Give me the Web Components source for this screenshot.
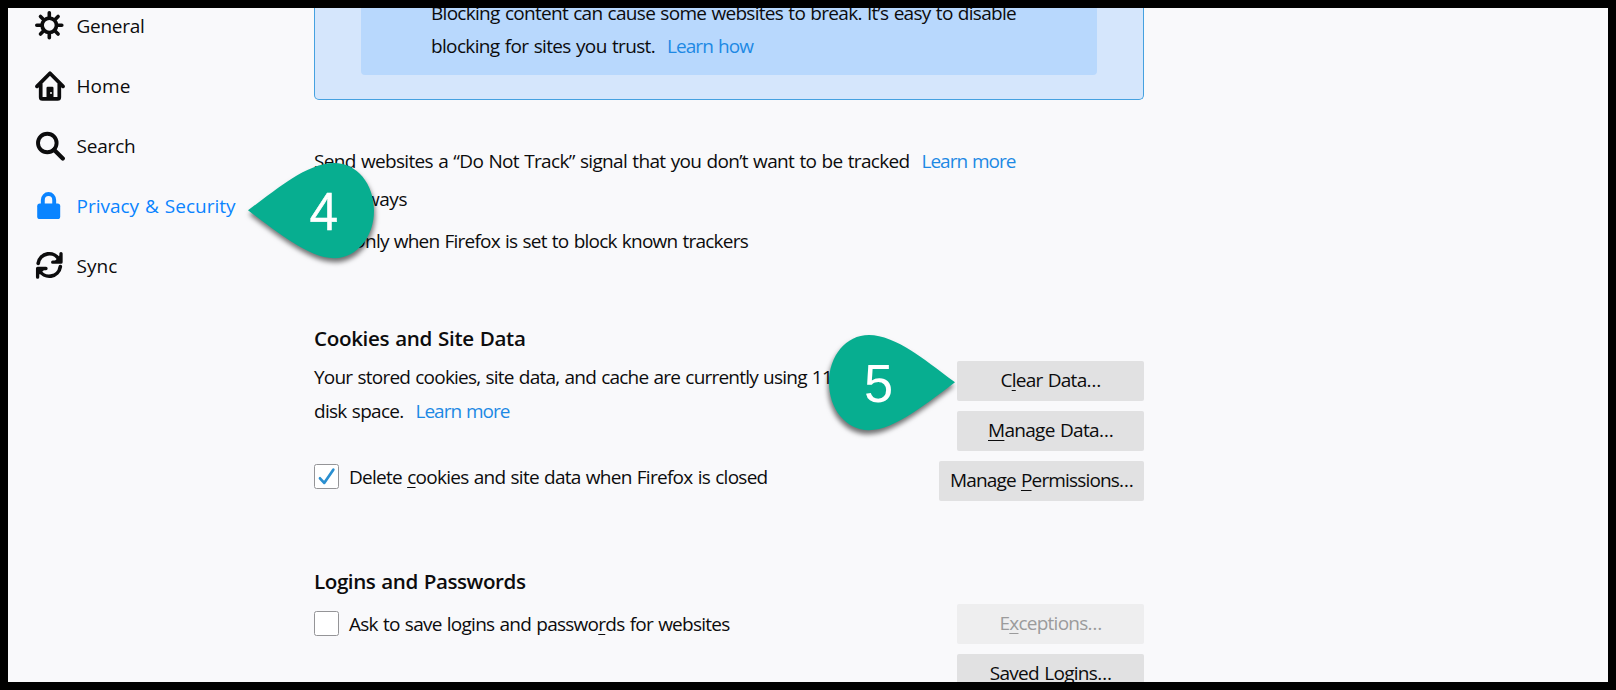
<!DOCTYPE html>
<html lang="en">
<head>
<meta charset="utf-8">
<title>Privacy &amp; Security</title>
<style>
html, body { margin: 0; height: 100%; background: #000; overflow: hidden; }
body { font-family: "Open Sans", "Noto Sans", sans-serif; font-size: 19px; color: #0c0c0d; }
</style>
</head>
<body>
<settings-page></settings-page>
<script>
const define = (name, html, setup) => customElements.define(name, class extends HTMLElement {
  connectedCallback() {
    if (this.shadowRoot) return;
    const t = document.createElement('template');
    t.innerHTML = html;
    this.attachShadow({ mode: 'open' }).append(t.content.cloneNode(true));
    if (setup) setup(this, this.shadowRoot);
  }
});

const ICONS = {
  general: `<circle cx="14.3" cy="14.3" r="7.2" fill="none" stroke="currentColor" stroke-width="3.7"/><path d="M14.3 1.8v4M14.3 22.8v4M1.8 14.3h4M22.8 14.3h4M5.5 5.5l3 3M20.1 20.1l3 3M5.5 23.1l3-3M20.1 8.5l3-3" stroke="currentColor" stroke-width="3.6" stroke-linecap="round"/>`,
  home: `<path d="M2 15.4 15 2.3 28 15.4M5.7 13v13.2q0 1.7 1.7 1.7h15.2q1.7 0 1.7-1.7V13" fill="none" stroke="currentColor" stroke-width="3.7" stroke-linecap="round" stroke-linejoin="round"/><path d="M11.5 28V17q0-1.2 1.2-1.2h4.6q1.2 0 1.2 1.2v11z" fill="currentColor"/><circle cx="16" cy="22" r="1" fill="#f9f9fa"/>`,
  search: `<circle cx="12.3" cy="12" r="9.3" fill="none" stroke="currentColor" stroke-width="3.9"/><path d="M19 18.7 27.8 27.5" stroke="currentColor" stroke-width="4.2" stroke-linecap="round"/>`,
  lock: `<path d="M7.8 14V9a5.7 6 0 0 1 11.4 0v5" fill="none" stroke="currentColor" stroke-width="3.9"/><rect x="2.2" y="12.6" width="23" height="15.4" rx="2.6" fill="currentColor"/>`,
  sync: `<path d="M3.2 12.3A11.2 11.2 0 0 1 24.3 9M25.3 15.7A11.2 11.2 0 0 1 4.2 19" fill="none" stroke="currentColor" stroke-width="3.7" stroke-linecap="round"/><path d="M26 2.6v8.6h-8.3M2.6 26.2v-8.7H11" fill="none" stroke="currentColor" stroke-width="3.3" stroke-linecap="round" stroke-linejoin="round"/><path d="M26 3v8h-7zM2.6 25v-7H10z" fill="currentColor"/>`
};

/* One run of text, tracked so that it fills the width in its "w" attribute. */
define('fit-text', `<style>
  :host { display: inline-block; white-space: pre; word-spacing: 1px; }
  ::slotted(u) { text-decoration-thickness: 1.4px; text-underline-offset: 2.5px; text-decoration-skip-ink: none; }
</style><slot></slot>`, el => {
  const w = +el.getAttribute('w'), n = el.textContent.length;
  el.style.letterSpacing = ((w - el.getBoundingClientRect().width) / n).toFixed(3) + 'px';
});

define('nav-item', `<style>
  :host { display: flex; align-items: center; height: 60px; padding-left: 27px; line-height: 36px; }
  :host([active]) { color: #0a84ff; }
  svg { width: 30px; height: 30px; margin-right: 11.5px; flex: none; display: block; }
</style><svg viewBox="0 0 30 30"></svg><slot></slot>`, (el, root) => {
  root.querySelector('svg').innerHTML = ICONS[el.getAttribute('icon')];
});

define('text-link', `<style>:host { color: #1d89e4; margin-left: 12px; }</style><slot></slot>`);

define('push-button', `<style>
  :host { display: block; box-sizing: border-box; min-width: 187px; height: 40px; line-height: 39px;
    padding: 0 11px; text-align: center; background: #e1e1e2; border-radius: 2px; white-space: nowrap; }
  :host([disabled]) { background: #eeeeef; color: #9b9b9c; }
</style><slot></slot>`);

define('check-box', `<style>
  :host { display: flex; align-items: center; height: 33px; line-height: 33px; }
  i { box-sizing: border-box; width: 25px; height: 25px; margin-right: 10px; border: 1px solid #949497; border-radius: 2.5px; background: #fff; }
  svg { display: none; width: 23px; height: 23px; }
  :host([checked]) svg { display: block; }
  slot { display: block; padding-top: 2px; }
</style><i><svg viewBox="0 0 23 23"><path d="M5 13.3 9.2 17.9 18.3 4.7" fill="none" stroke="#2a8fd0" stroke-width="2.7" stroke-linecap="round" stroke-linejoin="round"/></svg></i><slot></slot>`);

define('section-title', `<style>
  :host { display: block; height: 33px; line-height: 35px; font-size: 20.6px; font-weight: 600; }
</style><slot></slot>`);

define('info-panel', `<style>
  :host { display: block; box-sizing: border-box; width: 830px; margin-top: -13px; padding: 0 46px 24px; background: #d5e6fc;
    border: 1px solid #45a1e0; border-top: 0; border-radius: 0 0 5px 5px; }
  div { padding: 0 0 13px 70px; background: #b8d8fd; border-radius: 0 0 4px 4px; line-height: 33px; }
</style><div><slot></slot></div>`);

/* Numbered teardrop marker laid over the page. */
define('step-pin', `<style>
  :host { position: absolute; width: 127px; height: 96px; }
  svg { position: absolute; inset: 0; overflow: visible; filter: drop-shadow(1px 4px 2.5px rgba(0,0,0,.55)); }
  :host([flip]) svg { transform: scaleX(-1); }
  span { position: absolute; left: 24px; right: 0; top: 0; text-align: center; line-height: 94px; color: #fff; font-size: 51.5px; -webkit-text-stroke: .6px #fff; transform: scaleX(.94); }
  :host([flip]) span { left: 0; right: 26px; font-family: "Liberation Sans", sans-serif; font-size: 54px; line-height: 96px; -webkit-text-stroke: 0; transform: scaleX(.97); }
</style><svg width="127" height="96" viewBox="0 0 127 96"><path d="M0 47.3C18 34 32 23 44 15.5 58 6.5 73 0 86 0 109 0 126 21 126 47.5 126 74 109 95.2 86 95.2 73 95.2 58 88 44 79 32 71.5 18 61 0 47.3z" fill="#07ae90"/></svg><span><slot></slot></span>`);

define('settings-page', `<style>
  :host { display: block; box-sizing: border-box; width: 1616px; height: 690px; padding: 8px; background: #000; }
  .frame { position: relative; display: flex; height: 674px; box-sizing: border-box; padding-top: 1px; overflow: hidden; background: #f9f9fb; }
  nav { width: 306px; flex: none; margin-top: -13px; }
  main { width: 830px; flex: none; }
  .line { height: 33px; line-height: 35px; white-space: nowrap; }
  .send { margin-top: 44px; }
  .choice { padding-left: 35px; margin-top: 5px; }
  .choice + .choice { margin-top: 9px; padding-left: 37px; }
  .row { display: flex; justify-content: space-between; margin-top: 6px; }
  .copy { line-height: 34px; white-space: nowrap; }
  .copy check-box { margin-top: 32px; }
  .buttons { display: flex; flex-direction: column; align-items: flex-end; gap: 10px; margin-top: 1px; }
  .cookies { margin-top: 64px; }
  .logins { margin-top: 63px; }
  .last { margin-top: 7px; }
  .last .buttons { margin-top: 0; }
  .last .copy check-box { margin-top: 3px; }
  .four { left: 240px; top: 155px; }
  .five { left: 820px; top: 327px; }
</style>
<div class="frame">
  <nav>
    <nav-item icon="general"><fit-text w="68">General</fit-text></nav-item>
    <nav-item icon="home"><fit-text w="54">Home</fit-text></nav-item>
    <nav-item icon="search"><fit-text w="59">Search</fit-text></nav-item>
    <nav-item icon="lock" active><fit-text w="159">Privacy &amp; Security</fit-text></nav-item>
    <nav-item icon="sync"><fit-text w="41">Sync</fit-text></nav-item>
  </nav>
  <main>
    <info-panel>
      <div class="line"><fit-text w="585">Blocking content can cause some websites to break. It’s easy to disable</fit-text></div>
      <div class="line"><fit-text w="224">blocking for sites you trust.</fit-text><text-link><fit-text w="86">Learn how</fit-text></text-link></div>
    </info-panel>
    <div class="line send"><fit-text w="595.5">Send websites a “Do Not Track” signal that you don’t want to be tracked</fit-text><text-link><fit-text w="94">Learn more</fit-text></text-link></div>
    <div class="line choice"><fit-text w="58">Always</fit-text></div>
    <div class="line choice"><fit-text w="397">Only when Firefox is set to block known trackers</fit-text></div>

    <section-title class="cookies"><fit-text w="211.5">Cookies and Site Data</fit-text></section-title>
    <div class="row">
      <div class="copy">
        <div><fit-text w="518">Your stored cookies, site data, and cache are currently using 11</fit-text></div>
        <div><fit-text w="89.5">disk space.</fit-text><text-link><fit-text w="94">Learn more</fit-text></text-link></div>
        <check-box checked><fit-text w="418.5">Delete <u>c</u>ookies and site data when Firefox is closed</fit-text></check-box>
      </div>
      <div class="buttons">
        <push-button><fit-text w="100">C<u>l</u>ear Data…</fit-text></push-button>
        <push-button><fit-text w="125"><u>M</u>anage Data…</fit-text></push-button>
        <push-button><fit-text w="183">Manage <u>P</u>ermissions…</fit-text></push-button>
      </div>
    </div>

    <section-title class="logins"><fit-text w="211.5">Logins and Passwords</fit-text></section-title>
    <div class="row last">
      <div class="copy">
        <check-box><fit-text w="380.5">Ask to save logins and passwo<u>r</u>ds for websites</fit-text></check-box>
      </div>
      <div class="buttons">
        <push-button disabled><fit-text w="102">E<u>x</u>ceptions…</fit-text></push-button>
        <push-button><fit-text w="121.5">Saved Logins…</fit-text></push-button>
      </div>
    </div>
  </main>
  <step-pin class="four">4</step-pin>
  <step-pin class="five" flip>5</step-pin>
</div>`);
</script>
</body>
</html>
